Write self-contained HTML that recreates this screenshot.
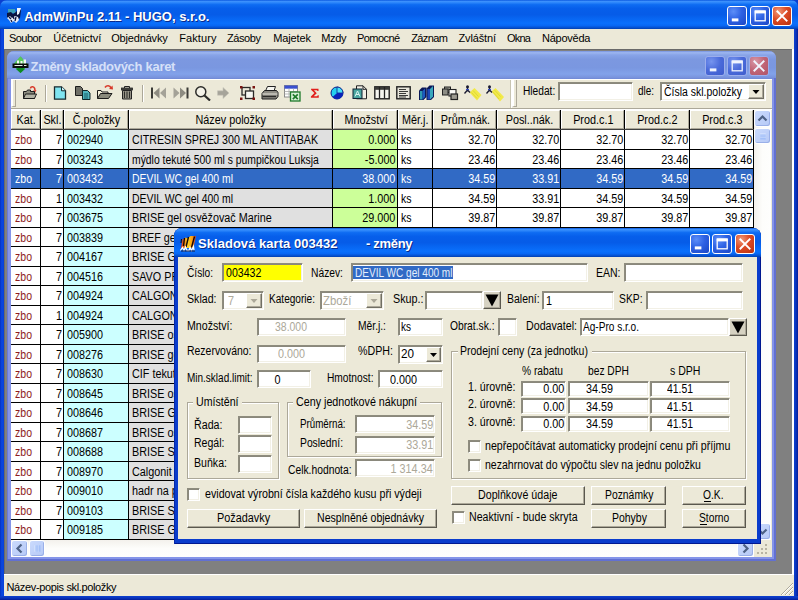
<!DOCTYPE html>
<html><head><meta charset="utf-8"><title>AdmWinPu 2.11 - HUGO, s.r.o.</title>
<style>
html,body{margin:0;padding:0}
body{width:798px;height:600px;overflow:hidden;position:relative;background:#ECE9D8;font-family:'Liberation Sans', sans-serif;font-size:11px}
div,span,svg{position:absolute}
span{white-space:pre}
div svg{left:0;top:0}
</style></head>
<body>
<div style="left:0px;top:0px;width:798px;height:600px;background:#0A3FD0"></div>
<div style="left:0px;top:0px;width:798px;height:29px;background:linear-gradient(to bottom,#0A58E0 0%,#3C90FC 5%,#2C86FA 9%,#0E6CF2 16%,#065EEA 30%,#065CE8 50%,#0868F4 68%,#0A70FC 80%,#0868F4 88%,#0656D8 94%,#0240B0 100%);border-radius:7px 7px 0 0"></div>
<div style="left:0px;top:29px;width:4px;height:571px;background:linear-gradient(to right,#0630C0,#0A48E0 45%,#0840D8)"></div>
<div style="left:794px;top:29px;width:4px;height:571px;background:linear-gradient(to right,#0C40D0,#0A34BC 50%,#041C98)"></div>
<div style="left:0px;top:596px;width:798px;height:4px;background:linear-gradient(to bottom,#0C40D0,#0A34BC 50%,#041C98)"></div>
<div style="left:4px;top:29px;width:790px;height:20px;background:#ECE9D8"></div>
<div style="left:4px;top:49px;width:790px;height:525px;background:#808080;box-shadow:inset 1px 1px 0 #6a6a6a"></div>
<div style="left:792px;top:49px;width:2px;height:525px;background:#fff"></div>
<div style="left:4px;top:574px;width:790px;height:22px;background:#ECE9D8;border-top:1px solid #fff;box-sizing:border-box"></div>
<svg style="left:6px;top:7px" width="17" height="17" viewBox="0 0 17 17"><path d="M2 2h7l1 4-8 1z" fill="#3CA0B8"/><path d="M1 6l4-1 2 2 3-2 2-3 3 1-1 8-4 3-6-1-3-3z" fill="#0A1440"/><path d="M11 1h4l-2 6-2 1z" fill="#F4F8FF"/><path d="M1 11l3-2 2 2 3-2 3 1 1 3-3 3-2-2-3 2-2-3z" fill="#E8EEF8"/><path d="M3 10l2 2M7 9l1 3M10 10l-1 4M5 13l1 2" stroke="#0A1440" stroke-width="1.300"/></svg>
<span style="top:9.1px;line-height:15px;font-size:13px;color:#fff;font-weight:700;left:24.2px;letter-spacing:-0.01px;text-shadow:1px 1px 0 #0a2a8a;">AdmWinPu 2.11 - HUGO, s.r.o.</span>
<span style="top:32.1px;line-height:13px;font-size:11px;color:#000;left:8.9px;letter-spacing:-0.50px;">Soubor</span>
<span style="top:32.1px;line-height:13px;font-size:11px;color:#000;left:53.3px;letter-spacing:-0.03px;">Účetnictví</span>
<span style="top:32.1px;line-height:13px;font-size:11px;color:#000;left:111.2px;letter-spacing:-0.17px;">Objednávky</span>
<span style="top:32.1px;line-height:13px;font-size:11px;color:#000;left:179.2px;letter-spacing:0.10px;">Faktury</span>
<span style="top:32.1px;line-height:13px;font-size:11px;color:#000;left:226.9px;letter-spacing:-0.40px;">Zásoby</span>
<span style="top:32.1px;line-height:13px;font-size:11px;color:#000;left:273.2px;letter-spacing:-0.12px;">Majetek</span>
<span style="top:32.1px;line-height:13px;font-size:11px;color:#000;left:321.3px;letter-spacing:-0.39px;">Mzdy</span>
<span style="top:32.1px;line-height:13px;font-size:11px;color:#000;left:357.0px;letter-spacing:-0.56px;">Pomocné</span>
<span style="top:32.1px;line-height:13px;font-size:11px;color:#000;left:411.2px;letter-spacing:-0.61px;">Záznam</span>
<span style="top:32.1px;line-height:13px;font-size:11px;color:#000;left:458.5px;letter-spacing:-0.15px;">Zvláštní</span>
<span style="top:32.1px;line-height:13px;font-size:11px;color:#000;left:507.0px;letter-spacing:-0.77px;">Okna</span>
<span style="top:32.1px;line-height:13px;font-size:11px;color:#000;left:542.0px;letter-spacing:-0.24px;">Nápověda</span>
<span style="top:580.6px;line-height:13px;font-size:11px;color:#000;left:6.5px;letter-spacing:-0.36px;">Název-popis skl.položky</span>
<div style="left:727px;top:6px;width:20px;height:20px;background:radial-gradient(circle at 30% 25%,#5C8EF8 0%,#2E62E4 45%,#1A46C4 100%);border:1px solid #fff;border-radius:3px;box-sizing:border-box"><svg width="18" height="18" viewBox="1 1 18 18"><rect x="4.8" y="12.4" width="6.6" height="3" fill="#fff"/></svg></div>
<div style="left:750px;top:6px;width:20px;height:20px;background:radial-gradient(circle at 30% 25%,#5C8EF8 0%,#2E62E4 45%,#1A46C4 100%);border:1px solid #fff;border-radius:3px;box-sizing:border-box"><svg width="18" height="18" viewBox="1 1 18 18"><rect x="5.2" y="5.2" width="10.0" height="9.6" fill="none" stroke="#fff" stroke-width="1.3"/><rect x="4.8" y="4.4" width="10.8" height="3" fill="#fff"/></svg></div>
<div style="left:772px;top:6px;width:20px;height:20px;background:radial-gradient(circle at 30% 25%,#F09A78 0%,#DC4A24 45%,#B8300E 100%);border:1px solid #fff;border-radius:3px;box-sizing:border-box"><svg width="18" height="18" viewBox="1 1 18 18"><path d="M5.4 5.4L14.6 14.6M14.6 5.4L5.4 14.6" stroke="#fff" stroke-width="1.9" stroke-linecap="square"/></svg></div>
<div style="left:7px;top:51px;width:769px;height:510px;background:#8494E8;border-radius:7px 7px 0 0"></div>
<div style="left:7px;top:51px;width:769px;height:28px;background:linear-gradient(to bottom,#7693E0 0%,#9DB6F0 6%,#88A4E8 14%,#7C98E0 30%,#7A97E0 60%,#82A2EA 82%,#7A94DE 94%,#6F88D4 100%);border-radius:7px 7px 0 0"></div>
<div style="left:7px;top:78px;width:1px;height:483px;background:#6A7AD4"></div>
<div style="left:774px;top:78px;width:2px;height:483px;background:#6270D2"></div>
<div style="left:7px;top:559px;width:769px;height:2px;background:#6270D2"></div>
<svg style="left:12px;top:56px" width="17" height="18" viewBox="0 0 17 18"><path d="M8.500 .5l7.500 8.500-7.500 8-7.500-8z" fill="#22B83A"/><path d="M8.500 .5l3 3.500-1 5h-6l-2-2z" fill="#58C858"/><path d="M4 13l4.500 4 4.500-4-4.500-2z" fill="#0E8A22"/><path d="M5 4.500h2v3.500h-2zM8.500 5h2v3h-2zM11.500 3.500h2.500v4.500h-2.500z" fill="#F4F8F4"/><path d="M.5 7.500h16v4.500h-16z" fill="#0A100A"/><path d="M2.500 9.500h8M12 9.500h2.500" stroke="#E8F0E8" stroke-width="1"/></svg>
<span style="top:59.1px;line-height:15px;font-size:13px;color:#D6E0F8;font-weight:700;left:30.5px;letter-spacing:-0.29px;">Změny skladových karet</span>
<div style="left:705px;top:56px;width:20px;height:20px;background:radial-gradient(circle at 30% 25%,#7694EE 0%,#4A6ADA 50%,#3E5CCC 100%);border:1px solid #9CAEEC;border-radius:3px;box-sizing:border-box"><svg width="18" height="18" viewBox="1 1 18 18"><rect x="4.8" y="12.4" width="6.6" height="3" fill="#F0F4FE"/></svg></div>
<div style="left:727px;top:56px;width:20px;height:20px;background:radial-gradient(circle at 30% 25%,#7694EE 0%,#4A6ADA 50%,#3E5CCC 100%);border:1px solid #9CAEEC;border-radius:3px;box-sizing:border-box"><svg width="18" height="18" viewBox="1 1 18 18"><rect x="5.2" y="5.2" width="10.0" height="9.6" fill="none" stroke="#F0F4FE" stroke-width="1.3"/><rect x="4.8" y="4.4" width="10.8" height="3" fill="#F0F4FE"/></svg></div>
<div style="left:749px;top:56px;width:20px;height:20px;background:radial-gradient(circle at 30% 25%,#D898A6 0%,#C06476 50%,#B05468 100%);border:1px solid #9CAEEC;border-radius:3px;box-sizing:border-box"><svg width="18" height="18" viewBox="1 1 18 18"><path d="M5.4 5.4L14.6 14.6M14.6 5.4L5.4 14.6" stroke="#F0F4FE" stroke-width="1.9" stroke-linecap="square"/></svg></div>
<div style="left:11px;top:79px;width:761px;height:478px;background:#ECE9D8"></div>
<div style="left:11px;top:79px;width:761px;height:1px;background:#fff"></div>
<div style="left:11px;top:108px;width:761px;height:1px;background:#ACA899"></div>
<div style="left:11px;top:109px;width:761px;height:1px;background:#fff"></div>
<div style="left:11px;top:80px;width:5px;height:27px;border-left:2px solid #fff;border-right:1px solid #ACA899;border-bottom:1px solid #ACA899;box-sizing:border-box"></div>
<div style="left:510px;top:80px;width:1px;height:28px;background:#C8C5B2"></div>
<div style="left:511px;top:80px;width:1px;height:28px;background:#fff"></div>
<div style="left:512px;top:80px;width:5px;height:27px;border-left:2px solid #fff;border-right:1px solid #ACA899;border-bottom:1px solid #ACA899;box-sizing:border-box"></div>
<div style="left:45px;top:85px;width:1px;height:17px;background:#ACA899"></div>
<div style="left:46px;top:85px;width:1px;height:17px;background:#fff"></div>
<div style="left:142px;top:85px;width:1px;height:17px;background:#ACA899"></div>
<div style="left:143px;top:85px;width:1px;height:17px;background:#fff"></div>
<svg style="left:22px;top:85px" width="16" height="16" viewBox="0 0 16 16"><path d="M8.5 3.5c0-2 3-2.5 4-.5l.5 2" stroke="#D83A2A" stroke-width="1.6" fill="none"/><path d="M11 5.5l3.5-.5-1.5 3z" fill="#D83A2A"/><path d="M1.5 13.5v-7h3l1-1.5h3v1.5h4v7z" fill="#8C8C80" stroke="#1C1C1C" stroke-width="1"/><path d="M1.5 13.5l2-4.5h11l-2 4.5z" fill="#B4B4A6" stroke="#1C1C1C" stroke-width="1"/></svg>
<svg style="left:53px;top:86px" width="14" height="14" viewBox="0 0 14 14"><path d="M1.5 .8h7l4 4v8.400h-11z" fill="#7FE4F0" stroke="#1A2A2E" stroke-width="1.3"/><path d="M8.500 .8v4h4" fill="#C8F6FA" stroke="#1A2A2E" stroke-width="1"/></svg>
<svg style="left:74px;top:86px" width="17" height="14" viewBox="0 0 17 14"><path d="M1.500 .5h5l2 2v7h-7z" fill="#6E6E66" stroke="#1A1A1A" stroke-width="1"/><path d="M8.500 4.500h5l2.500 2.500v6.500h-7.500z" fill="#4FB4BE" stroke="#10282C" stroke-width="1"/><path d="M10 8h4M10 10h4M10 12h4" stroke="#0E4A52" stroke-width=".8"/></svg>
<svg style="left:96px;top:84px" width="18" height="16" viewBox="0 0 18 16"><path d="M9 3.500c1.500-2.500 5-2.500 6 .5" stroke="#D83A2A" stroke-width="1.600" fill="none"/><path d="M13 5l4 .5-.5-4z" fill="#D83A2A"/><path d="M1.500 14.500v-8h3.500l1 1.500h6v2" fill="#F4F0DC" stroke="#1C1C1C" stroke-width="1"/><path d="M1.500 14.500l3-5h11.500l-3.500 5z" fill="#8A8A7C" stroke="#1C1C1C" stroke-width="1"/></svg>
<svg style="left:120px;top:86px" width="14" height="15" viewBox="0 0 14 15"><path d="M4.500 2v-1.500h5v1.500" fill="none" stroke="#222" stroke-width="1"/><rect x="1.500" y="2" width="11" height="2" fill="#4A4A44" stroke="#222" stroke-width=".8"/><path d="M2.500 4.500h9v8.500h-9z" fill="#9A978A" stroke="#222" stroke-width="1"/><path d="M4.500 5.500v6.500M7 5.500v6.500M9.500 5.500v6.500" stroke="#2E2E2A" stroke-width="1.100"/></svg>
<svg style="left:150px;top:87px" width="17" height="12" viewBox="0 0 17 12"><rect x="1" y=".5" width="2" height="11" fill="#3A3A36"/><path d="M9.500 .5v11l-6-5.500z" fill="#8E8C82"/><path d="M16 .5v11l-6-5.500z" fill="#A4A298"/></svg>
<svg style="left:173px;top:87px" width="17" height="12" viewBox="0 0 17 12"><rect x="13.500" y=".5" width="2" height="11" fill="#3A3A36"/><path d="M7 .5v11l6-5.500z" fill="#8E8C82"/><path d="M.5 .5v11l6-5.500z" fill="#A4A298"/></svg>
<svg style="left:194px;top:85px" width="18" height="16" viewBox="0 0 18 16"><circle cx="6.800" cy="6.800" r="5" fill="#F4F2E8" stroke="#2A2A28" stroke-width="1.500"/><path d="M10.500 10.500l5.500 5" stroke="#2A2A28" stroke-width="2.200"/></svg>
<svg style="left:217px;top:87px" width="13" height="12" viewBox="0 0 13 12"><path d="M.5 3.800h5.500v-3.300l6 5.500-6 5.500v-3.300h-5.500z" fill="#A6A49A" stroke="#C8C6BA" stroke-width=".6"/></svg>
<svg style="left:239px;top:85px" width="17" height="16" viewBox="0 0 17 16"><rect x="3" y="2.500" width="8" height="7.500" fill="#ECE9D8" stroke="#2A2A28" stroke-width="1.300"/><rect x="6.500" y="6" width="8" height="7.500" fill="#F8F8F2" stroke="#2A2A28" stroke-width="1.300"/><g fill="#7A1410"><rect x="1" y="1" width="2.500" height="2.500"/><rect x="13.500" y="1" width="2.500" height="2.500"/><rect x="1" y="12.500" width="2.500" height="2.500"/><rect x="13.500" y="12.500" width="2.500" height="2.500"/></g></svg>
<svg style="left:261px;top:85px" width="18" height="16" viewBox="0 0 18 16"><path d="M4.500 6l2-4.500h8l-1.500 4.500z" fill="#F6F6F0" stroke="#222" stroke-width="1"/><path d="M1 8.500l2.500-3h12l1.500 2v4l-2 2.500h-14z" fill="#8E8C84" stroke="#1C1C1C" stroke-width="1"/><path d="M1.500 9h15" stroke="#E8E6DC" stroke-width="1"/><path d="M1.500 11.500h13.500" stroke="#2A2A28" stroke-width="1.400"/></svg>
<svg style="left:284px;top:85px" width="17" height="17" viewBox="0 0 17 17"><rect x=".5" y=".5" width="13" height="11.500" fill="#fff" stroke="#8A8A8A" stroke-width="1"/><rect x=".5" y=".5" width="13" height="3.200" fill="#3A50D0"/><path d="M.5 6.500h13M.5 9h13M5 3.500v8.500M9.500 3.500v8.500" stroke="#A8A8A8" stroke-width=".8"/><rect x="6.500" y="7" width="9.500" height="9" fill="#D8F0D8" stroke="#1E7A2A" stroke-width="1.300"/><path d="M8.800 9.300l5 4.800M13.800 9.300l-5 4.800" stroke="#1E7A2A" stroke-width="1.600"/></svg>
<svg style="left:309.5px;top:88px" width="10" height="10.5" viewBox="0 0 11 12"><path d="M1 .8h8.500v2.700h-1.200l-.5-1h-3.500l3.200 3.400-3.500 3.600h4l.6-1.200h1.200v2.900h-9v-1.400l4-4.100-3.800-3.800z" fill="#E0201C"/></svg>
<svg style="left:330px;top:86px" width="14" height="14" viewBox="0 0 14 14"><circle cx="7" cy="7" r="6" fill="#24D0EE" stroke="#0A1E8A" stroke-width="1"/><path d="M7 7v-6a6 6 0 0 1 6 6z" fill="#48E0F8" stroke="#0A1E8A" stroke-width=".8"/><path d="M7 7h6a6 6 0 0 1-10.400 4.100z" fill="#0A22B8"/></svg>
<svg style="left:352px;top:85px" width="16" height="16" viewBox="0 0 16 16"><path d="M4.500 .8h6.500l3.500 3.500v9.500h-10z" fill="#F2F0E6" stroke="#222" stroke-width="1"/><path d="M11 .8v3.500h3.500" fill="none" stroke="#222" stroke-width="1"/><rect x="1" y="4" width="9" height="9.500" fill="#4AA6A0" stroke="#123" stroke-width="1"/><path d="M3 11.500l2.500-5.500 2.500 5.500M4 9.500h3" stroke="#D8F4F0" stroke-width="1" fill="none"/></svg>
<svg style="left:374px;top:86px" width="16" height="14" viewBox="0 0 16 14"><rect x=".8" y=".8" width="14.400" height="12" fill="#F6F6F0" stroke="#222" stroke-width="1.400"/><rect x=".8" y=".8" width="14.400" height="3" fill="#3A3A38"/><path d="M5.500 1v11.500M10.500 1v11.500" stroke="#222" stroke-width="1.300"/></svg>
<svg style="left:396px;top:86px" width="15" height="14" viewBox="0 0 15 14"><rect x=".8" y=".8" width="13.400" height="12" fill="#E8E6DC" stroke="#222" stroke-width="1.400"/><path d="M3 3.500h7M3 5.500h9M3 7.500h7M3 9.500h9M3 11h7" stroke="#3A3A38" stroke-width="1"/></svg>
<svg style="left:418px;top:85px" width="17" height="16" viewBox="0 0 17 16"><path d="M1 15v-9.500l3-3h4.500v9.500l-3 3z" fill="#0C1858"/><path d="M2 14.500v-8.500h2.500v8.500z" fill="#2E9AB0"/><path d="M4.500 6l2.500-2.500v8.500l-2.500 2.500z" fill="#1C5AC0"/><path d="M8.500 15v-11.500l3-3h4.500v11.500l-3 3z" fill="#0C1858"/><path d="M9.500 14.500v-10.500h2.500v10.500z" fill="#1C48B8"/><path d="M12 4l3-3v10.500l-3 3z" fill="#3AA8BC"/></svg>
<svg style="left:441px;top:86px" width="18" height="15" viewBox="0 0 18 15"><rect x="3.500" y="1" width="6" height="5.500" fill="#9A9A90" stroke="#222" stroke-width="1"/><rect x="1.500" y="3" width="5.500" height="6" fill="#8C8C84" stroke="#222" stroke-width="1"/><rect x="8" y="3.500" width="7" height="6.500" fill="#FAFAF6" stroke="#222" stroke-width="1.100"/><rect x="10" y="8" width="6.500" height="5.500" fill="#9C9A90" stroke="#222" stroke-width="1.200"/></svg>
<svg style="left:463px;top:85px" width="19" height="17" viewBox="0 0 19 17"><path d="M6.500 7.500l5-4.500 7 7-4.500 5.500z" fill="#F2EA48"/><path d="M10 5.500l5.500 6M8.500 7.500l5.500 6" stroke="#DCD434" stroke-width=".9"/><circle cx="4.500" cy="1.800" r="1.500" fill="#1A1A30"/><path d="M4.500 3v3.500M1.500 8.500l3-3.500 2.500 2.500" stroke="#1A1A30" stroke-width="1.300" fill="none"/><path d="M3 4.500h3" stroke="#3048C0" stroke-width="1.200"/></svg>
<svg style="left:485px;top:85px" width="20" height="18" viewBox="0 0 20 18"><path d="M6.500 6.500l4-3.500 8.500 9-4 4.500z" fill="#F2EA48"/><path d="M9.500 5l6 6.500M8 7l6 7" stroke="#DCD434" stroke-width=".9"/><circle cx="4.500" cy="1.800" r="1.500" fill="#1A1A30"/><path d="M4.500 3v3.500M1.500 8.500l3-3.500 2.500 2.500" stroke="#1A1A30" stroke-width="1.300" fill="none"/><path d="M3 4.500h3" stroke="#3048C0" stroke-width="1.200"/></svg>
<span style="top:84.1px;line-height:14px;font-size:12.5px;color:#000;left:523.3px;transform-origin:0 50%;transform:scaleX(0.813);">Hledat:</span>
<div style="left:558px;top:82px;width:75px;height:19px;background:#fff;box-sizing:border-box;border:1px solid;border-color:#8E8C7E #fff #fff #8E8C7E;box-shadow:inset 1px 1px 0 #8A887C,inset -1px -1px 0 #F2F0E6;"></div>
<span style="top:83.9px;line-height:14px;font-size:12.5px;color:#000;left:637.5px;transform-origin:0 50%;transform:scaleX(0.794);">dle:</span>
<div style="left:660px;top:82px;width:106px;height:19px;background:#fff;box-sizing:border-box;border:1px solid;border-color:#8E8C7E #fff #fff #8E8C7E;box-shadow:inset 1px 1px 0 #8A887C,inset -1px -1px 0 #F2F0E6;"></div>
<span style="top:84.6px;line-height:14px;font-size:12.5px;color:#000;left:663.5px;transform-origin:0 50%;transform:scaleX(0.838);">Čísla skl.položky</span>
<div style="left:748px;top:84px;width:16px;height:15px;background:#ECE9D8;box-sizing:border-box;border:1px solid;border-color:#fff #716F64 #716F64 #fff;box-shadow:inset -1px -1px 0 #ACA899"><svg width="14" height="13" style="position:absolute;left:0;top:0"><path d="M3.5 5.0h7l-3.5 4z" fill="#000"/></svg></div>
<div style="left:11px;top:110px;width:743px;height:430px;background:#fff"></div>
<div style="left:64px;top:130px;width:64px;height:410px;background:#CCFFFF"></div>
<div style="left:129px;top:130px;width:203px;height:410px;background:#E0E0E0"></div>
<div style="left:333px;top:130px;width:64px;height:410px;background:#CCFF99"></div>
<div style="left:11px;top:169px;width:743px;height:20px;background:#316AC5"></div>
<div style="left:40px;top:130px;width:1px;height:410px;background:#000"></div>
<div style="left:63px;top:130px;width:1px;height:410px;background:#000"></div>
<div style="left:128px;top:130px;width:1px;height:410px;background:#000"></div>
<div style="left:332px;top:130px;width:1px;height:410px;background:#000"></div>
<div style="left:397px;top:130px;width:1px;height:410px;background:#000"></div>
<div style="left:432px;top:130px;width:1px;height:410px;background:#000"></div>
<div style="left:496px;top:130px;width:1px;height:410px;background:#000"></div>
<div style="left:560px;top:130px;width:1px;height:410px;background:#000"></div>
<div style="left:624px;top:130px;width:1px;height:410px;background:#000"></div>
<div style="left:689px;top:130px;width:1px;height:410px;background:#000"></div>
<div style="left:753px;top:130px;width:1px;height:410px;background:#000"></div>
<div style="left:11px;top:149px;width:743px;height:1px;background:#000"></div>
<div style="left:11px;top:168px;width:743px;height:1px;background:#000"></div>
<div style="left:11px;top:188px;width:743px;height:1px;background:#000"></div>
<div style="left:11px;top:207px;width:743px;height:1px;background:#000"></div>
<div style="left:11px;top:227px;width:743px;height:1px;background:#000"></div>
<div style="left:11px;top:246px;width:743px;height:1px;background:#000"></div>
<div style="left:11px;top:266px;width:743px;height:1px;background:#000"></div>
<div style="left:11px;top:285px;width:743px;height:1px;background:#000"></div>
<div style="left:11px;top:305px;width:743px;height:1px;background:#000"></div>
<div style="left:11px;top:324px;width:743px;height:1px;background:#000"></div>
<div style="left:11px;top:344px;width:743px;height:1px;background:#000"></div>
<div style="left:11px;top:363px;width:743px;height:1px;background:#000"></div>
<div style="left:11px;top:383px;width:743px;height:1px;background:#000"></div>
<div style="left:11px;top:402px;width:743px;height:1px;background:#000"></div>
<div style="left:11px;top:422px;width:743px;height:1px;background:#000"></div>
<div style="left:11px;top:441px;width:743px;height:1px;background:#000"></div>
<div style="left:11px;top:461px;width:743px;height:1px;background:#000"></div>
<div style="left:11px;top:480px;width:743px;height:1px;background:#000"></div>
<div style="left:11px;top:500px;width:743px;height:1px;background:#000"></div>
<div style="left:11px;top:519px;width:743px;height:1px;background:#000"></div>
<div style="left:11px;top:539px;width:743px;height:1px;background:#000"></div>
<div style="left:11px;top:110px;width:743px;height:20px;background:#000"></div>
<div style="left:11px;top:110px;width:29px;height:19px;background:#ECE9D8;box-sizing:border-box;border:1px solid;border-color:#fff #ACA899 #ACA899 #fff"></div>
<span style="top:113.3px;line-height:14px;font-size:12.5px;color:#000;left:14.9px;transform-origin:50% 50%;transform:scaleX(0.865);">Kat.</span>
<div style="left:41px;top:110px;width:22px;height:19px;background:#ECE9D8;box-sizing:border-box;border:1px solid;border-color:#fff #ACA899 #ACA899 #fff"></div>
<span style="top:113.3px;line-height:14px;font-size:12.5px;color:#000;left:42.1px;transform-origin:50% 50%;transform:scaleX(0.865);">Skl.</span>
<div style="left:64px;top:110px;width:64px;height:19px;background:#ECE9D8;box-sizing:border-box;border:1px solid;border-color:#fff #ACA899 #ACA899 #fff"></div>
<span style="top:113.3px;line-height:14px;font-size:12.5px;color:#000;left:69.1px;transform-origin:50% 50%;transform:scaleX(0.865);">Č.položky</span>
<div style="left:129px;top:110px;width:203px;height:19px;background:#ECE9D8;box-sizing:border-box;border:1px solid;border-color:#fff #ACA899 #ACA899 #fff"></div>
<span style="top:113.3px;line-height:14px;font-size:12.5px;color:#000;left:190.4px;transform-origin:50% 50%;transform:scaleX(0.865);">Název položky</span>
<div style="left:333px;top:110px;width:64px;height:19px;background:#ECE9D8;box-sizing:border-box;border:1px solid;border-color:#fff #ACA899 #ACA899 #fff"></div>
<span style="top:113.3px;line-height:14px;font-size:12.5px;color:#000;left:340.5px;transform-origin:50% 50%;transform:scaleX(0.865);">Množství</span>
<div style="left:398px;top:110px;width:34px;height:19px;background:#ECE9D8;box-sizing:border-box;border:1px solid;border-color:#fff #ACA899 #ACA899 #fff"></div>
<span style="top:113.3px;line-height:14px;font-size:12.5px;color:#000;left:400.2px;transform-origin:50% 50%;transform:scaleX(0.865);">Měr.j.</span>
<div style="left:433px;top:110px;width:63px;height:19px;background:#ECE9D8;box-sizing:border-box;border:1px solid;border-color:#fff #ACA899 #ACA899 #fff"></div>
<span style="top:113.3px;line-height:14px;font-size:12.5px;color:#000;left:436.5px;transform-origin:50% 50%;transform:scaleX(0.865);">Prům.nák.</span>
<div style="left:497px;top:110px;width:63px;height:19px;background:#ECE9D8;box-sizing:border-box;border:1px solid;border-color:#fff #ACA899 #ACA899 #fff"></div>
<span style="top:113.3px;line-height:14px;font-size:12.5px;color:#000;left:501.6px;transform-origin:50% 50%;transform:scaleX(0.865);">Posl..nák.</span>
<div style="left:561px;top:110px;width:63px;height:19px;background:#ECE9D8;box-sizing:border-box;border:1px solid;border-color:#fff #ACA899 #ACA899 #fff"></div>
<span style="top:113.3px;line-height:14px;font-size:12.5px;color:#000;left:569.7px;transform-origin:50% 50%;transform:scaleX(0.865);">Prod.c.1</span>
<div style="left:625px;top:110px;width:64px;height:19px;background:#ECE9D8;box-sizing:border-box;border:1px solid;border-color:#fff #ACA899 #ACA899 #fff"></div>
<span style="top:113.3px;line-height:14px;font-size:12.5px;color:#000;left:634.2px;transform-origin:50% 50%;transform:scaleX(0.865);">Prod.c.2</span>
<div style="left:690px;top:110px;width:63px;height:19px;background:#ECE9D8;box-sizing:border-box;border:1px solid;border-color:#fff #ACA899 #ACA899 #fff"></div>
<span style="top:113.3px;line-height:14px;font-size:12.5px;color:#000;left:698.7px;transform-origin:50% 50%;transform:scaleX(0.865);">Prod.c.3</span>
<div style="left:11px;top:129px;width:743px;height:1px;background:#404040"></div>
<span style="top:132.6px;line-height:14px;font-size:12.5px;color:#8E1C1C;left:15.0px;transform-origin:0 50%;transform:scaleX(0.843);">zbo</span>
<span style="top:132.6px;line-height:14px;font-size:12.5px;color:#000;right:736.0px;transform-origin:100% 50%;transform:scaleX(0.865);">7</span>
<span style="top:132.6px;line-height:14px;font-size:12.5px;color:#000;left:67.2px;transform-origin:0 50%;transform:scaleX(0.863);">002940</span>
<span style="top:132.6px;line-height:14px;font-size:12.5px;color:#000;left:131.5px;transform-origin:0 50%;transform:scaleX(0.853);">CITRESIN SPREJ 300 ML ANTITABAK</span>
<span style="top:132.6px;line-height:14px;font-size:12.5px;color:#000;right:402.3px;transform-origin:100% 50%;transform:scaleX(0.865);">0.000</span>
<span style="top:132.6px;line-height:14px;font-size:12.5px;color:#000;left:401.0px;transform-origin:0 50%;transform:scaleX(0.840);">ks</span>
<span style="top:132.6px;line-height:14px;font-size:12.5px;color:#000;right:302.7px;transform-origin:100% 50%;transform:scaleX(0.865);">32.70</span>
<span style="top:132.6px;line-height:14px;font-size:12.5px;color:#000;right:238.7px;transform-origin:100% 50%;transform:scaleX(0.865);">32.70</span>
<span style="top:132.6px;line-height:14px;font-size:12.5px;color:#000;right:174.7px;transform-origin:100% 50%;transform:scaleX(0.865);">32.70</span>
<span style="top:132.6px;line-height:14px;font-size:12.5px;color:#000;right:109.7px;transform-origin:100% 50%;transform:scaleX(0.865);">32.70</span>
<span style="top:132.6px;line-height:14px;font-size:12.5px;color:#000;right:45.7px;transform-origin:100% 50%;transform:scaleX(0.865);">32.70</span>
<span style="top:152.6px;line-height:14px;font-size:12.5px;color:#8E1C1C;left:15.0px;transform-origin:0 50%;transform:scaleX(0.843);">zbo</span>
<span style="top:152.6px;line-height:14px;font-size:12.5px;color:#000;right:736.0px;transform-origin:100% 50%;transform:scaleX(0.865);">7</span>
<span style="top:152.6px;line-height:14px;font-size:12.5px;color:#000;left:67.2px;transform-origin:0 50%;transform:scaleX(0.863);">003243</span>
<span style="top:152.6px;line-height:14px;font-size:12.5px;color:#000;left:131.5px;transform-origin:0 50%;transform:scaleX(0.830);">mýdlo tekuté 500 ml s pumpičkou Luksja</span>
<span style="top:152.6px;line-height:14px;font-size:12.5px;color:#000;right:402.3px;transform-origin:100% 50%;transform:scaleX(0.865);">-5.000</span>
<span style="top:152.6px;line-height:14px;font-size:12.5px;color:#000;left:401.0px;transform-origin:0 50%;transform:scaleX(0.840);">ks</span>
<span style="top:152.6px;line-height:14px;font-size:12.5px;color:#000;right:302.7px;transform-origin:100% 50%;transform:scaleX(0.865);">23.46</span>
<span style="top:152.6px;line-height:14px;font-size:12.5px;color:#000;right:238.7px;transform-origin:100% 50%;transform:scaleX(0.865);">23.46</span>
<span style="top:152.6px;line-height:14px;font-size:12.5px;color:#000;right:174.7px;transform-origin:100% 50%;transform:scaleX(0.865);">23.46</span>
<span style="top:152.6px;line-height:14px;font-size:12.5px;color:#000;right:109.7px;transform-origin:100% 50%;transform:scaleX(0.865);">23.46</span>
<span style="top:152.6px;line-height:14px;font-size:12.5px;color:#000;right:45.7px;transform-origin:100% 50%;transform:scaleX(0.865);">23.46</span>
<span style="top:171.6px;line-height:14px;font-size:12.5px;color:#fff;left:15.0px;transform-origin:0 50%;transform:scaleX(0.843);">zbo</span>
<span style="top:171.6px;line-height:14px;font-size:12.5px;color:#fff;right:736.0px;transform-origin:100% 50%;transform:scaleX(0.865);">7</span>
<span style="top:171.6px;line-height:14px;font-size:12.5px;color:#fff;left:67.2px;transform-origin:0 50%;transform:scaleX(0.863);">003432</span>
<span style="top:171.6px;line-height:14px;font-size:12.5px;color:#fff;left:131.5px;transform-origin:0 50%;transform:scaleX(0.834);">DEVIL WC gel 400 ml</span>
<span style="top:171.6px;line-height:14px;font-size:12.5px;color:#fff;right:402.3px;transform-origin:100% 50%;transform:scaleX(0.865);">38.000</span>
<span style="top:171.6px;line-height:14px;font-size:12.5px;color:#fff;left:401.0px;transform-origin:0 50%;transform:scaleX(0.840);">ks</span>
<span style="top:171.6px;line-height:14px;font-size:12.5px;color:#fff;right:302.7px;transform-origin:100% 50%;transform:scaleX(0.865);">34.59</span>
<span style="top:171.6px;line-height:14px;font-size:12.5px;color:#fff;right:238.7px;transform-origin:100% 50%;transform:scaleX(0.865);">33.91</span>
<span style="top:171.6px;line-height:14px;font-size:12.5px;color:#fff;right:174.7px;transform-origin:100% 50%;transform:scaleX(0.865);">34.59</span>
<span style="top:171.6px;line-height:14px;font-size:12.5px;color:#fff;right:109.7px;transform-origin:100% 50%;transform:scaleX(0.865);">34.59</span>
<span style="top:171.6px;line-height:14px;font-size:12.5px;color:#fff;right:45.7px;transform-origin:100% 50%;transform:scaleX(0.865);">34.59</span>
<span style="top:191.6px;line-height:14px;font-size:12.5px;color:#8E1C1C;left:15.0px;transform-origin:0 50%;transform:scaleX(0.843);">zbo</span>
<span style="top:191.6px;line-height:14px;font-size:12.5px;color:#000;right:736.0px;transform-origin:100% 50%;transform:scaleX(0.865);">1</span>
<span style="top:191.6px;line-height:14px;font-size:12.5px;color:#000;left:67.2px;transform-origin:0 50%;transform:scaleX(0.863);">003432</span>
<span style="top:191.6px;line-height:14px;font-size:12.5px;color:#000;left:131.5px;transform-origin:0 50%;transform:scaleX(0.834);">DEVIL WC gel 400 ml</span>
<span style="top:191.6px;line-height:14px;font-size:12.5px;color:#000;right:402.3px;transform-origin:100% 50%;transform:scaleX(0.865);">1.000</span>
<span style="top:191.6px;line-height:14px;font-size:12.5px;color:#000;left:401.0px;transform-origin:0 50%;transform:scaleX(0.840);">ks</span>
<span style="top:191.6px;line-height:14px;font-size:12.5px;color:#000;right:302.7px;transform-origin:100% 50%;transform:scaleX(0.865);">34.59</span>
<span style="top:191.6px;line-height:14px;font-size:12.5px;color:#000;right:238.7px;transform-origin:100% 50%;transform:scaleX(0.865);">33.91</span>
<span style="top:191.6px;line-height:14px;font-size:12.5px;color:#000;right:174.7px;transform-origin:100% 50%;transform:scaleX(0.865);">34.59</span>
<span style="top:191.6px;line-height:14px;font-size:12.5px;color:#000;right:109.7px;transform-origin:100% 50%;transform:scaleX(0.865);">34.59</span>
<span style="top:191.6px;line-height:14px;font-size:12.5px;color:#000;right:45.7px;transform-origin:100% 50%;transform:scaleX(0.865);">34.59</span>
<span style="top:210.6px;line-height:14px;font-size:12.5px;color:#8E1C1C;left:15.0px;transform-origin:0 50%;transform:scaleX(0.843);">zbo</span>
<span style="top:210.6px;line-height:14px;font-size:12.5px;color:#000;right:736.0px;transform-origin:100% 50%;transform:scaleX(0.865);">7</span>
<span style="top:210.6px;line-height:14px;font-size:12.5px;color:#000;left:67.2px;transform-origin:0 50%;transform:scaleX(0.863);">003675</span>
<span style="top:210.6px;line-height:14px;font-size:12.5px;color:#000;left:131.5px;transform-origin:0 50%;transform:scaleX(0.863);">BRISE gel osvěžovač Marine</span>
<span style="top:210.6px;line-height:14px;font-size:12.5px;color:#000;right:402.3px;transform-origin:100% 50%;transform:scaleX(0.865);">29.000</span>
<span style="top:210.6px;line-height:14px;font-size:12.5px;color:#000;left:401.0px;transform-origin:0 50%;transform:scaleX(0.840);">ks</span>
<span style="top:210.6px;line-height:14px;font-size:12.5px;color:#000;right:302.7px;transform-origin:100% 50%;transform:scaleX(0.865);">39.87</span>
<span style="top:210.6px;line-height:14px;font-size:12.5px;color:#000;right:238.7px;transform-origin:100% 50%;transform:scaleX(0.865);">39.87</span>
<span style="top:210.6px;line-height:14px;font-size:12.5px;color:#000;right:174.7px;transform-origin:100% 50%;transform:scaleX(0.865);">39.87</span>
<span style="top:210.6px;line-height:14px;font-size:12.5px;color:#000;right:109.7px;transform-origin:100% 50%;transform:scaleX(0.865);">39.87</span>
<span style="top:210.6px;line-height:14px;font-size:12.5px;color:#000;right:45.7px;transform-origin:100% 50%;transform:scaleX(0.865);">39.87</span>
<span style="top:230.6px;line-height:14px;font-size:12.5px;color:#8E1C1C;left:15.0px;transform-origin:0 50%;transform:scaleX(0.843);">zbo</span>
<span style="top:230.6px;line-height:14px;font-size:12.5px;color:#000;right:736.0px;transform-origin:100% 50%;transform:scaleX(0.865);">7</span>
<span style="top:230.6px;line-height:14px;font-size:12.5px;color:#000;left:67.2px;transform-origin:0 50%;transform:scaleX(0.863);">003839</span>
<span style="top:230.6px;line-height:14px;font-size:12.5px;color:#000;left:131.5px;transform-origin:0 50%;transform:scaleX(0.865);">BREF gel</span>
<span style="top:249.6px;line-height:14px;font-size:12.5px;color:#8E1C1C;left:15.0px;transform-origin:0 50%;transform:scaleX(0.843);">zbo</span>
<span style="top:249.6px;line-height:14px;font-size:12.5px;color:#000;right:736.0px;transform-origin:100% 50%;transform:scaleX(0.865);">7</span>
<span style="top:249.6px;line-height:14px;font-size:12.5px;color:#000;left:67.2px;transform-origin:0 50%;transform:scaleX(0.863);">004167</span>
<span style="top:249.6px;line-height:14px;font-size:12.5px;color:#000;left:131.5px;transform-origin:0 50%;transform:scaleX(0.865);">BRISE G</span>
<span style="top:269.6px;line-height:14px;font-size:12.5px;color:#8E1C1C;left:15.0px;transform-origin:0 50%;transform:scaleX(0.843);">zbo</span>
<span style="top:269.6px;line-height:14px;font-size:12.5px;color:#000;right:736.0px;transform-origin:100% 50%;transform:scaleX(0.865);">7</span>
<span style="top:269.6px;line-height:14px;font-size:12.5px;color:#000;left:67.2px;transform-origin:0 50%;transform:scaleX(0.863);">004516</span>
<span style="top:269.6px;line-height:14px;font-size:12.5px;color:#000;left:131.5px;transform-origin:0 50%;transform:scaleX(0.865);">SAVO PR</span>
<span style="top:288.6px;line-height:14px;font-size:12.5px;color:#8E1C1C;left:15.0px;transform-origin:0 50%;transform:scaleX(0.843);">zbo</span>
<span style="top:288.6px;line-height:14px;font-size:12.5px;color:#000;right:736.0px;transform-origin:100% 50%;transform:scaleX(0.865);">7</span>
<span style="top:288.6px;line-height:14px;font-size:12.5px;color:#000;left:67.2px;transform-origin:0 50%;transform:scaleX(0.863);">004924</span>
<span style="top:288.6px;line-height:14px;font-size:12.5px;color:#000;left:131.5px;transform-origin:0 50%;transform:scaleX(0.865);">CALGON</span>
<span style="top:308.6px;line-height:14px;font-size:12.5px;color:#8E1C1C;left:15.0px;transform-origin:0 50%;transform:scaleX(0.843);">zbo</span>
<span style="top:308.6px;line-height:14px;font-size:12.5px;color:#000;right:736.0px;transform-origin:100% 50%;transform:scaleX(0.865);">1</span>
<span style="top:308.6px;line-height:14px;font-size:12.5px;color:#000;left:67.2px;transform-origin:0 50%;transform:scaleX(0.863);">004924</span>
<span style="top:308.6px;line-height:14px;font-size:12.5px;color:#000;left:131.5px;transform-origin:0 50%;transform:scaleX(0.865);">CALGON</span>
<span style="top:327.6px;line-height:14px;font-size:12.5px;color:#8E1C1C;left:15.0px;transform-origin:0 50%;transform:scaleX(0.843);">zbo</span>
<span style="top:327.6px;line-height:14px;font-size:12.5px;color:#000;right:736.0px;transform-origin:100% 50%;transform:scaleX(0.865);">7</span>
<span style="top:327.6px;line-height:14px;font-size:12.5px;color:#000;left:67.2px;transform-origin:0 50%;transform:scaleX(0.863);">005900</span>
<span style="top:327.6px;line-height:14px;font-size:12.5px;color:#000;left:131.5px;transform-origin:0 50%;transform:scaleX(0.865);">BRISE os</span>
<span style="top:347.6px;line-height:14px;font-size:12.5px;color:#8E1C1C;left:15.0px;transform-origin:0 50%;transform:scaleX(0.843);">zbo</span>
<span style="top:347.6px;line-height:14px;font-size:12.5px;color:#000;right:736.0px;transform-origin:100% 50%;transform:scaleX(0.865);">7</span>
<span style="top:347.6px;line-height:14px;font-size:12.5px;color:#000;left:67.2px;transform-origin:0 50%;transform:scaleX(0.863);">008276</span>
<span style="top:347.6px;line-height:14px;font-size:12.5px;color:#000;left:131.5px;transform-origin:0 50%;transform:scaleX(0.865);">BRISE gel</span>
<span style="top:366.6px;line-height:14px;font-size:12.5px;color:#8E1C1C;left:15.0px;transform-origin:0 50%;transform:scaleX(0.843);">zbo</span>
<span style="top:366.6px;line-height:14px;font-size:12.5px;color:#000;right:736.0px;transform-origin:100% 50%;transform:scaleX(0.865);">7</span>
<span style="top:366.6px;line-height:14px;font-size:12.5px;color:#000;left:67.2px;transform-origin:0 50%;transform:scaleX(0.863);">008630</span>
<span style="top:366.6px;line-height:14px;font-size:12.5px;color:#000;left:131.5px;transform-origin:0 50%;transform:scaleX(0.865);">CIF tekutý</span>
<span style="top:386.6px;line-height:14px;font-size:12.5px;color:#8E1C1C;left:15.0px;transform-origin:0 50%;transform:scaleX(0.843);">zbo</span>
<span style="top:386.6px;line-height:14px;font-size:12.5px;color:#000;right:736.0px;transform-origin:100% 50%;transform:scaleX(0.865);">7</span>
<span style="top:386.6px;line-height:14px;font-size:12.5px;color:#000;left:67.2px;transform-origin:0 50%;transform:scaleX(0.863);">008645</span>
<span style="top:386.6px;line-height:14px;font-size:12.5px;color:#000;left:131.5px;transform-origin:0 50%;transform:scaleX(0.865);">BRISE os</span>
<span style="top:405.6px;line-height:14px;font-size:12.5px;color:#8E1C1C;left:15.0px;transform-origin:0 50%;transform:scaleX(0.843);">zbo</span>
<span style="top:405.6px;line-height:14px;font-size:12.5px;color:#000;right:736.0px;transform-origin:100% 50%;transform:scaleX(0.865);">7</span>
<span style="top:405.6px;line-height:14px;font-size:12.5px;color:#000;left:67.2px;transform-origin:0 50%;transform:scaleX(0.863);">008646</span>
<span style="top:405.6px;line-height:14px;font-size:12.5px;color:#000;left:131.5px;transform-origin:0 50%;transform:scaleX(0.865);">BRISE G</span>
<span style="top:425.6px;line-height:14px;font-size:12.5px;color:#8E1C1C;left:15.0px;transform-origin:0 50%;transform:scaleX(0.843);">zbo</span>
<span style="top:425.6px;line-height:14px;font-size:12.5px;color:#000;right:736.0px;transform-origin:100% 50%;transform:scaleX(0.865);">7</span>
<span style="top:425.6px;line-height:14px;font-size:12.5px;color:#000;left:67.2px;transform-origin:0 50%;transform:scaleX(0.863);">008687</span>
<span style="top:425.6px;line-height:14px;font-size:12.5px;color:#000;left:131.5px;transform-origin:0 50%;transform:scaleX(0.865);">BRISE os</span>
<span style="top:444.6px;line-height:14px;font-size:12.5px;color:#8E1C1C;left:15.0px;transform-origin:0 50%;transform:scaleX(0.843);">zbo</span>
<span style="top:444.6px;line-height:14px;font-size:12.5px;color:#000;right:736.0px;transform-origin:100% 50%;transform:scaleX(0.865);">7</span>
<span style="top:444.6px;line-height:14px;font-size:12.5px;color:#000;left:67.2px;transform-origin:0 50%;transform:scaleX(0.863);">008688</span>
<span style="top:444.6px;line-height:14px;font-size:12.5px;color:#000;left:131.5px;transform-origin:0 50%;transform:scaleX(0.865);">BRISE SI</span>
<span style="top:464.6px;line-height:14px;font-size:12.5px;color:#8E1C1C;left:15.0px;transform-origin:0 50%;transform:scaleX(0.843);">zbo</span>
<span style="top:464.6px;line-height:14px;font-size:12.5px;color:#000;right:736.0px;transform-origin:100% 50%;transform:scaleX(0.865);">7</span>
<span style="top:464.6px;line-height:14px;font-size:12.5px;color:#000;left:67.2px;transform-origin:0 50%;transform:scaleX(0.863);">008970</span>
<span style="top:464.6px;line-height:14px;font-size:12.5px;color:#000;left:131.5px;transform-origin:0 50%;transform:scaleX(0.865);">Calgonit G</span>
<span style="top:483.6px;line-height:14px;font-size:12.5px;color:#8E1C1C;left:15.0px;transform-origin:0 50%;transform:scaleX(0.843);">zbo</span>
<span style="top:483.6px;line-height:14px;font-size:12.5px;color:#000;right:736.0px;transform-origin:100% 50%;transform:scaleX(0.865);">7</span>
<span style="top:483.6px;line-height:14px;font-size:12.5px;color:#000;left:67.2px;transform-origin:0 50%;transform:scaleX(0.863);">009010</span>
<span style="top:483.6px;line-height:14px;font-size:12.5px;color:#000;left:131.5px;transform-origin:0 50%;transform:scaleX(0.865);">hadr na p</span>
<span style="top:503.6px;line-height:14px;font-size:12.5px;color:#8E1C1C;left:15.0px;transform-origin:0 50%;transform:scaleX(0.843);">zbo</span>
<span style="top:503.6px;line-height:14px;font-size:12.5px;color:#000;right:736.0px;transform-origin:100% 50%;transform:scaleX(0.865);">7</span>
<span style="top:503.6px;line-height:14px;font-size:12.5px;color:#000;left:67.2px;transform-origin:0 50%;transform:scaleX(0.863);">009103</span>
<span style="top:503.6px;line-height:14px;font-size:12.5px;color:#000;left:131.5px;transform-origin:0 50%;transform:scaleX(0.865);">BRISE SI</span>
<span style="top:522.6px;line-height:14px;font-size:12.5px;color:#8E1C1C;left:15.0px;transform-origin:0 50%;transform:scaleX(0.843);">zbo</span>
<span style="top:522.6px;line-height:14px;font-size:12.5px;color:#000;right:736.0px;transform-origin:100% 50%;transform:scaleX(0.865);">7</span>
<span style="top:522.6px;line-height:14px;font-size:12.5px;color:#000;left:67.2px;transform-origin:0 50%;transform:scaleX(0.863);">009185</span>
<span style="top:522.6px;line-height:14px;font-size:12.5px;color:#000;left:131.5px;transform-origin:0 50%;transform:scaleX(0.865);">BRISE G</span>
<div style="left:754px;top:110px;width:17px;height:430px;background:linear-gradient(to right,#F3F1EC,#FDFDFB 50%,#FEFEFD)"></div>
<div style="left:754px;top:110px;width:17px;height:17px;background:linear-gradient(135deg,#CADAFD,#B6C9F6);box-sizing:border-box;border:1px solid #fff;border-radius:3px;box-shadow:inset -1px -1px 0 #9AB0E8"><svg width="15" height="15" viewBox="0 0 15 15" style="position:absolute;left:0;top:0"><path d="M3.5 9.5L7.5 5.5L11.5 9.5" stroke="#4D6185" stroke-width="2.2" fill="none"/></svg></div>
<div style="left:754px;top:128px;width:17px;height:16px;background:linear-gradient(135deg,#CADAFD,#B6C9F6);box-sizing:border-box;border:1px solid #fff;border-radius:3px;box-shadow:inset -1px -1px 0 #9AB0E8"><svg width="15" height="14" viewBox="0 0 15 15" style="position:absolute;left:0;top:0"><path d="M5 5.5h6M5 7.5h6M5 9.5h6" stroke="#EEF4FE" stroke-width="1"/><path d="M5 6.5h6M5 8.5h6M5 10.5h6" stroke="#8CB0F8" stroke-width="1"/></svg></div>
<div style="left:754px;top:523px;width:17px;height:17px;background:linear-gradient(135deg,#CADAFD,#B6C9F6);box-sizing:border-box;border:1px solid #fff;border-radius:3px;box-shadow:inset -1px -1px 0 #9AB0E8"><svg width="15" height="15" viewBox="0 0 15 15" style="position:absolute;left:0;top:0"><path d="M3.5 5.5L7.5 9.5L11.5 5.5" stroke="#4D6185" stroke-width="2.2" fill="none"/></svg></div>
<div style="left:11px;top:540px;width:743px;height:17px;background:linear-gradient(to bottom,#F3F1EC,#FDFDFB 50%,#FEFEFD)"></div>
<div style="left:11px;top:540px;width:17px;height:17px;background:linear-gradient(135deg,#CADAFD,#B6C9F6);box-sizing:border-box;border:1px solid #fff;border-radius:3px;box-shadow:inset -1px -1px 0 #9AB0E8"><svg width="15" height="15" viewBox="0 0 15 15" style="position:absolute;left:0;top:0"><path d="M9.5 3.5L5.5 7.5L9.5 11.5" stroke="#4D6185" stroke-width="2.2" fill="none"/></svg></div>
<div style="left:29px;top:540px;width:16px;height:17px;background:linear-gradient(135deg,#CADAFD,#B6C9F6);box-sizing:border-box;border:1px solid #fff;border-radius:3px;box-shadow:inset -1px -1px 0 #9AB0E8"><svg width="14" height="15" viewBox="0 0 15 15" style="position:absolute;left:0;top:0"><path d="M5 4v7M7 4v7M9 4v7" stroke="#EEF4FE" stroke-width="1" transform="translate(0.5,0)"/><path d="M6 4v7M8 4v7M10 4v7" stroke="#8CB0F8" stroke-width="1" transform="translate(0.5,0)"/></svg></div>
<div style="left:737px;top:540px;width:17px;height:17px;background:linear-gradient(135deg,#CADAFD,#B6C9F6);box-sizing:border-box;border:1px solid #fff;border-radius:3px;box-shadow:inset -1px -1px 0 #9AB0E8"><svg width="15" height="15" viewBox="0 0 15 15" style="position:absolute;left:0;top:0"><path d="M5.5 3.5L9.5 7.5L5.5 11.5" stroke="#4D6185" stroke-width="2.2" fill="none"/></svg></div>
<div style="left:754px;top:540px;width:18px;height:17px;background:#ECE9D8"><svg width="18" height="17" style="position:absolute;left:0;top:0"><g fill="#B8B4A2" transform="translate(0,1)"><rect x="11" y="3" width="2" height="2"/><rect x="7" y="7" width="2" height="2"/><rect x="11" y="7" width="2" height="2"/><rect x="3" y="11" width="2" height="2"/><rect x="7" y="11" width="2" height="2"/><rect x="11" y="11" width="2" height="2"/></g></svg></div>
<svg style="position:absolute;left:780px;top:582px" width="14" height="14"><path d="M13 1L1 13M13 5L5 13M13 9L9 13" stroke="#ACA899" stroke-width="1"/><path d="M13 2L2 13M13 6L6 13M13 10L10 13" stroke="#fff" stroke-width="1"/></svg>
<div style="left:174px;top:228px;width:587px;height:315.5px;background:#0A3CCC;border-radius:8px 8px 0 0;box-shadow:inset 1px 0 0 #0628A8,inset -1px -1px 0 #001890"></div>
<div style="left:174px;top:228px;width:587px;height:29px;background:linear-gradient(to bottom,#0A58E0 0%,#3C90FC 5%,#2C86FA 9%,#0E6CF2 16%,#065EEA 30%,#065CE8 50%,#0868F4 68%,#0A70FC 80%,#0868F4 88%,#0656D8 94%,#0240B0 100%);border-radius:8px 8px 0 0"></div>
<div style="left:178px;top:257px;width:579px;height:282.0px;background:#ECE9D8"></div>
<svg style="left:180px;top:236px" width="17" height="16" viewBox="0 0 17 16"><defs><linearGradient id="fl" x1="0" y1="0" x2="1" y2="0"><stop offset="0" stop-color="#D82810"/><stop offset=".45" stop-color="#FFD820"/><stop offset=".75" stop-color="#FF9A10"/><stop offset="1" stop-color="#E03810"/></linearGradient></defs><path d="M1 12l1.500-8.500 3-2 2 1 3-2.500 5.500-.5-2.500 12.500z" fill="url(#fl)"/><path d="M4.500 2l-1 8M8.500 1l-2.500 10M14.500 .5l-3 11" stroke="#180808" stroke-width="1.400" fill="none"/><path d="M1.500 3l-.5 4" stroke="#180808" stroke-width="1"/><path d="M.5 14.500l2-3 1.500 3 1.500-3.500 1.500 3.500h2l1-3 1.500 3 2-4 .5 4" stroke="#fff" stroke-width="1.300" fill="none"/><path d="M1 15h14" stroke="#101840" stroke-width="1"/></svg>
<span style="top:236.2px;line-height:15px;font-size:13px;color:#fff;font-weight:700;left:198.0px;letter-spacing:0.04px;text-shadow:1px 1px 0 #0a2a8a;">Skladová karta 003432</span>
<span style="top:236.2px;line-height:15px;font-size:13px;color:#fff;font-weight:700;left:366.0px;letter-spacing:-0.32px;text-shadow:1px 1px 0 #0a2a8a;">- změny</span>
<div style="left:690px;top:234px;width:20px;height:20px;background:radial-gradient(circle at 30% 25%,#5C8EF8 0%,#2E62E4 45%,#1A46C4 100%);border:1px solid #fff;border-radius:3px;box-sizing:border-box"><svg width="18" height="18" viewBox="1 1 18 18"><rect x="4.8" y="12.4" width="6.6" height="3" fill="#fff"/></svg></div>
<div style="left:712px;top:234px;width:20px;height:20px;background:radial-gradient(circle at 30% 25%,#5C8EF8 0%,#2E62E4 45%,#1A46C4 100%);border:1px solid #fff;border-radius:3px;box-sizing:border-box"><svg width="18" height="18" viewBox="1 1 18 18"><rect x="5.2" y="5.2" width="10.0" height="9.6" fill="none" stroke="#fff" stroke-width="1.3"/><rect x="4.8" y="4.4" width="10.8" height="3" fill="#fff"/></svg></div>
<div style="left:735px;top:234px;width:20px;height:20px;background:radial-gradient(circle at 30% 25%,#F09A78 0%,#DC4A24 45%,#B8300E 100%);border:1px solid #fff;border-radius:3px;box-sizing:border-box"><svg width="18" height="18" viewBox="1 1 18 18"><path d="M5.4 5.4L14.6 14.6M14.6 5.4L5.4 14.6" stroke="#fff" stroke-width="1.9" stroke-linecap="square"/></svg></div>
<span style="top:265.6px;line-height:14px;font-size:12.5px;color:#000;left:187.0px;transform-origin:0 50%;transform:scaleX(0.814);">Číslo:</span>
<div style="left:222px;top:263px;width:81px;height:19px;background:#FFFF00;box-sizing:border-box;border:1px solid;border-color:#8E8C7E #fff #fff #8E8C7E;box-shadow:inset 1px 1px 0 #8A887C,inset -1px -1px 0 #F2F0E6;"></div>
<span style="top:265.6px;line-height:14px;font-size:12.5px;color:#000;left:225.9px;transform-origin:0 50%;transform:scaleX(0.846);">003432</span>
<span style="top:265.6px;line-height:14px;font-size:12.5px;color:#000;left:310.5px;transform-origin:0 50%;transform:scaleX(0.822);">Název:</span>
<div style="left:351px;top:263px;width:237px;height:19px;background:#fff;box-sizing:border-box;border:1px solid;border-color:#8E8C7E #fff #fff #8E8C7E;box-shadow:inset 1px 1px 0 #8A887C,inset -1px -1px 0 #F2F0E6;"></div>
<div style="left:353px;top:266px;width:100px;height:13px;background:#316AC5"></div>
<span style="top:265.6px;line-height:14px;font-size:12.5px;color:#E4EEFC;left:354.5px;transform-origin:0 50%;transform:scaleX(0.805);">DEVIL WC gel 400 ml</span>
<span style="top:265.6px;line-height:14px;font-size:12.5px;color:#000;left:595.5px;transform-origin:0 50%;transform:scaleX(0.839);">EAN:</span>
<div style="left:624px;top:263px;width:119px;height:19px;background:#fff;box-sizing:border-box;border:1px solid;border-color:#8E8C7E #fff #fff #8E8C7E;box-shadow:inset 1px 1px 0 #8A887C,inset -1px -1px 0 #F2F0E6;"></div>
<span style="top:291.6px;line-height:14px;font-size:12.5px;color:#000;left:187.0px;transform-origin:0 50%;transform:scaleX(0.849);">Sklad:</span>
<div style="left:222px;top:291px;width:42px;height:19px;background:#fff;box-sizing:border-box;border:1px solid;border-color:#8E8C7E #fff #fff #8E8C7E;box-shadow:inset 1px 1px 0 #8A887C,inset -1px -1px 0 #F2F0E6;"></div>
<span style="top:293.6px;line-height:14px;font-size:12.5px;color:#ACA899;left:227.5px;transform-origin:0 50%;transform:scaleX(0.865);">7</span>
<div style="left:246px;top:293px;width:16px;height:15px;background:#ECE9D8;box-sizing:border-box;border:1px solid;border-color:#fff #716F64 #716F64 #fff;box-shadow:inset -1px -1px 0 #ACA899"><svg width="14" height="13" style="position:absolute;left:0;top:0"><path d="M3.5 5.0h7l-3.5 4z" fill="#ACA899"/></svg></div>
<span style="top:291.6px;line-height:14px;font-size:12.5px;color:#000;left:269.0px;transform-origin:0 50%;transform:scaleX(0.807);">Kategorie:</span>
<div style="left:320px;top:291px;width:64px;height:19px;background:#fff;box-sizing:border-box;border:1px solid;border-color:#8E8C7E #fff #fff #8E8C7E;box-shadow:inset 1px 1px 0 #8A887C,inset -1px -1px 0 #F2F0E6;"></div>
<span style="top:293.6px;line-height:14px;font-size:12.5px;color:#ACA899;left:323.2px;transform-origin:0 50%;transform:scaleX(0.905);">Zboží</span>
<div style="left:366px;top:293px;width:16px;height:15px;background:#ECE9D8;box-sizing:border-box;border:1px solid;border-color:#fff #716F64 #716F64 #fff;box-shadow:inset -1px -1px 0 #ACA899"><svg width="14" height="13" style="position:absolute;left:0;top:0"><path d="M3.5 5.0h7l-3.5 4z" fill="#ACA899"/></svg></div>
<span style="top:291.6px;line-height:14px;font-size:12.5px;color:#000;left:392.5px;transform-origin:0 50%;transform:scaleX(0.861);">Skup.:</span>
<div style="left:425px;top:291px;width:58px;height:19px;background:#fff;box-sizing:border-box;border:1px solid;border-color:#8E8C7E #fff #fff #8E8C7E;box-shadow:inset 1px 1px 0 #8A887C,inset -1px -1px 0 #F2F0E6;"></div>
<div style="left:483px;top:291px;width:18px;height:18px;background:#D6D2C2;box-sizing:border-box;border:1px solid;border-color:#fff #5A584E #5A584E #fff;box-shadow:inset -1px -1px 0 #ACA899"><svg width="16" height="16"><path d="M1.5 2.5h13L8 14.5z" fill="#000"/></svg></div>
<span style="top:291.6px;line-height:14px;font-size:12.5px;color:#000;left:506.5px;transform-origin:0 50%;transform:scaleX(0.840);">Balení:</span>
<div style="left:542px;top:291px;width:72px;height:19px;background:#fff;box-sizing:border-box;border:1px solid;border-color:#8E8C7E #fff #fff #8E8C7E;box-shadow:inset 1px 1px 0 #8A887C,inset -1px -1px 0 #F2F0E6;"></div>
<span style="top:293.6px;line-height:14px;font-size:12.5px;color:#000;left:545.5px;transform-origin:0 50%;transform:scaleX(0.865);">1</span>
<span style="top:291.6px;line-height:14px;font-size:12.5px;color:#000;left:619.0px;transform-origin:0 50%;transform:scaleX(0.825);">SKP:</span>
<div style="left:646px;top:291px;width:97px;height:19px;background:#fff;box-sizing:border-box;border:1px solid;border-color:#8E8C7E #fff #fff #8E8C7E;box-shadow:inset 1px 1px 0 #8A887C,inset -1px -1px 0 #F2F0E6;"></div>
<span style="top:318.6px;line-height:14px;font-size:12.5px;color:#000;left:187.0px;transform-origin:0 50%;transform:scaleX(0.850);">Množství:</span>
<div style="left:257px;top:318px;width:89px;height:18px;background:#fff;box-sizing:border-box;border:1px solid;border-color:#8E8C7E #fff #fff #8E8C7E;box-shadow:inset 1px 1px 0 #8A887C,inset -1px -1px 0 #F2F0E6;"></div>
<span style="top:319.6px;line-height:14px;font-size:12.5px;color:#ACA899;left:274.5px;transform-origin:0 50%;transform:scaleX(0.837);">38.000</span>
<span style="top:318.6px;line-height:14px;font-size:12.5px;color:#000;left:357.5px;transform-origin:0 50%;transform:scaleX(0.822);">Měr.j.:</span>
<div style="left:398px;top:318px;width:45px;height:18px;background:#fff;box-sizing:border-box;border:1px solid;border-color:#8E8C7E #fff #fff #8E8C7E;box-shadow:inset 1px 1px 0 #8A887C,inset -1px -1px 0 #F2F0E6;"></div>
<span style="top:319.6px;line-height:14px;font-size:12.5px;color:#000;left:400.5px;transform-origin:0 50%;transform:scaleX(0.800);">ks</span>
<span style="top:318.6px;line-height:14px;font-size:12.5px;color:#000;left:450.0px;transform-origin:0 50%;transform:scaleX(0.821);">Obrat.sk.:</span>
<div style="left:498px;top:318px;width:19px;height:18px;background:#fff;box-sizing:border-box;border:1px solid;border-color:#8E8C7E #fff #fff #8E8C7E;box-shadow:inset 1px 1px 0 #8A887C,inset -1px -1px 0 #F2F0E6;"></div>
<span style="top:318.6px;line-height:14px;font-size:12.5px;color:#000;left:525.5px;transform-origin:0 50%;transform:scaleX(0.853);">Dodavatel:</span>
<div style="left:580px;top:318px;width:149px;height:18px;background:#fff;box-sizing:border-box;border:1px solid;border-color:#8E8C7E #fff #fff #8E8C7E;box-shadow:inset 1px 1px 0 #8A887C,inset -1px -1px 0 #F2F0E6;"></div>
<span style="top:319.6px;line-height:14px;font-size:12.5px;color:#000;left:583.0px;transform-origin:0 50%;transform:scaleX(0.806);">Ag-Pro s.r.o.</span>
<div style="left:729px;top:318px;width:18px;height:18px;background:#D6D2C2;box-sizing:border-box;border:1px solid;border-color:#fff #5A584E #5A584E #fff;box-shadow:inset -1px -1px 0 #ACA899"><svg width="16" height="16"><path d="M1.5 2.5h13L8 14.5z" fill="#000"/></svg></div>
<span style="top:344.3px;line-height:14px;font-size:12.5px;color:#000;left:187.0px;transform-origin:0 50%;transform:scaleX(0.836);">Rezervováno:</span>
<div style="left:257px;top:345px;width:89px;height:18px;background:#fff;box-sizing:border-box;border:1px solid;border-color:#8E8C7E #fff #fff #8E8C7E;box-shadow:inset 1px 1px 0 #8A887C,inset -1px -1px 0 #F2F0E6;"></div>
<span style="top:346.6px;line-height:14px;font-size:12.5px;color:#ACA899;left:277.5px;transform-origin:0 50%;transform:scaleX(0.863);">0.000</span>
<span style="top:344.3px;line-height:14px;font-size:12.5px;color:#000;left:357.5px;transform-origin:0 50%;transform:scaleX(0.854);">%DPH:</span>
<div style="left:398px;top:345px;width:45px;height:19px;background:#fff;box-sizing:border-box;border:1px solid;border-color:#8E8C7E #fff #fff #8E8C7E;box-shadow:inset 1px 1px 0 #8A887C,inset -1px -1px 0 #F2F0E6;"></div>
<span style="top:347.1px;line-height:14px;font-size:12.5px;color:#000;left:400.5px;transform-origin:0 50%;transform:scaleX(0.935);">20</span>
<div style="left:426px;top:347px;width:15px;height:15px;background:#ECE9D8;box-sizing:border-box;border:1px solid;border-color:#fff #716F64 #716F64 #fff;box-shadow:inset -1px -1px 0 #ACA899"><svg width="13" height="13" style="position:absolute;left:0;top:0"><path d="M3.0 5.0h7l-3.5 4z" fill="#000"/></svg></div>
<span style="top:371.3px;line-height:14px;font-size:12.5px;color:#000;left:187.0px;transform-origin:0 50%;transform:scaleX(0.799);">Min.sklad.limit:</span>
<div style="left:257px;top:370px;width:54px;height:18px;background:#fff;box-sizing:border-box;border:1px solid;border-color:#8E8C7E #fff #fff #8E8C7E;box-shadow:inset 1px 1px 0 #8A887C,inset -1px -1px 0 #F2F0E6;"></div>
<span style="top:372.6px;line-height:14px;font-size:12.5px;color:#000;left:274.0px;transform-origin:50% 50%;transform:scaleX(0.865);">0</span>
<span style="top:371.3px;line-height:14px;font-size:12.5px;color:#000;left:327.0px;transform-origin:0 50%;transform:scaleX(0.816);">Hmotnost:</span>
<div style="left:378px;top:370px;width:65px;height:18px;background:#fff;box-sizing:border-box;border:1px solid;border-color:#8E8C7E #fff #fff #8E8C7E;box-shadow:inset 1px 1px 0 #8A887C,inset -1px -1px 0 #F2F0E6;"></div>
<span style="top:372.6px;line-height:14px;font-size:12.5px;color:#000;left:389.5px;transform-origin:0 50%;transform:scaleX(0.863);">0.000</span>
<div style="left:187px;top:402px;width:92px;height:77px;box-sizing:border-box;border:1px solid #ACA899;box-shadow:1px 1px 0 #fff,inset 1px 1px 0 #fff"></div>
<div style="left:193px;top:396px;width:48.5px;height:13px;background:#ECE9D8"></div>
<span style="top:395.1px;line-height:14px;font-size:12.5px;color:#000;left:195.5px;transform-origin:0 50%;transform:scaleX(0.850);">Umístění</span>
<span style="top:418.1px;line-height:14px;font-size:12.5px;color:#000;left:194.0px;transform-origin:0 50%;transform:scaleX(0.854);">Řada:</span>
<div style="left:238px;top:416px;width:34px;height:18px;background:#fff;box-sizing:border-box;border:1px solid;border-color:#8E8C7E #fff #fff #8E8C7E;box-shadow:inset 1px 1px 0 #8A887C,inset -1px -1px 0 #F2F0E6;"></div>
<span style="top:436.1px;line-height:14px;font-size:12.5px;color:#000;left:194.0px;transform-origin:0 50%;transform:scaleX(0.844);">Regál:</span>
<div style="left:238px;top:435px;width:34px;height:18px;background:#fff;box-sizing:border-box;border:1px solid;border-color:#8E8C7E #fff #fff #8E8C7E;box-shadow:inset 1px 1px 0 #8A887C,inset -1px -1px 0 #F2F0E6;"></div>
<span style="top:456.3px;line-height:14px;font-size:12.5px;color:#000;left:194.0px;transform-origin:0 50%;transform:scaleX(0.848);">Buňka:</span>
<div style="left:238px;top:455px;width:34px;height:18px;background:#fff;box-sizing:border-box;border:1px solid;border-color:#8E8C7E #fff #fff #8E8C7E;box-shadow:inset 1px 1px 0 #8A887C,inset -1px -1px 0 #F2F0E6;"></div>
<div style="left:287px;top:402px;width:155px;height:55px;box-sizing:border-box;border:1px solid #ACA899;box-shadow:1px 1px 0 #fff,inset 1px 1px 0 #fff"></div>
<div style="left:293px;top:396px;width:127px;height:13px;background:#ECE9D8"></div>
<span style="top:395.1px;line-height:14px;font-size:12.5px;color:#000;left:295.5px;transform-origin:0 50%;transform:scaleX(0.858);">Ceny jednotkové nákupní</span>
<span style="top:417.1px;line-height:14px;font-size:12.5px;color:#000;left:299.5px;transform-origin:0 50%;transform:scaleX(0.781);">Průměrná:</span>
<div style="left:355px;top:415px;width:80px;height:18px;background:#fff;box-sizing:border-box;border:1px solid;border-color:#8E8C7E #fff #fff #8E8C7E;box-shadow:inset 1px 1px 0 #8A887C,inset -1px -1px 0 #F2F0E6;"></div>
<span style="top:417.6px;line-height:14px;font-size:12.5px;color:#ACA899;right:365.0px;transform-origin:100% 50%;transform:scaleX(0.865);">34.59</span>
<span style="top:436.1px;line-height:14px;font-size:12.5px;color:#000;left:299.5px;transform-origin:0 50%;transform:scaleX(0.825);">Poslední:</span>
<div style="left:355px;top:436px;width:80px;height:18px;background:#fff;box-sizing:border-box;border:1px solid;border-color:#8E8C7E #fff #fff #8E8C7E;box-shadow:inset 1px 1px 0 #8A887C,inset -1px -1px 0 #F2F0E6;"></div>
<span style="top:438.3px;line-height:14px;font-size:12.5px;color:#ACA899;right:365.0px;transform-origin:100% 50%;transform:scaleX(0.865);">33.91</span>
<span style="top:462.5px;line-height:14px;font-size:12.5px;color:#000;left:287.5px;transform-origin:0 50%;transform:scaleX(0.824);">Celk.hodnota:</span>
<div style="left:355px;top:459px;width:80px;height:18px;background:#fff;box-sizing:border-box;border:1px solid;border-color:#8E8C7E #fff #fff #8E8C7E;box-shadow:inset 1px 1px 0 #8A887C,inset -1px -1px 0 #F2F0E6;"></div>
<span style="top:461.6px;line-height:14px;font-size:12.5px;color:#ACA899;right:365.0px;transform-origin:100% 50%;transform:scaleX(0.865);">1 314.34</span>
<div style="left:187px;top:487.5px;width:13px;height:13px;background:#fff;box-sizing:border-box;border:1px solid;border-color:#8E8C7E #fff #fff #8E8C7E;box-shadow:inset 1px 1px 0 #8A887C,inset -1px -1px 0 #F2F0E6;"></div>
<span style="top:487.1px;line-height:14px;font-size:12.5px;color:#000;left:204.5px;transform-origin:0 50%;transform:scaleX(0.854);">evidovat výrobní čísla každého kusu při výdeji</span>
<div style="left:187px;top:509px;width:113px;height:19px;background:#ECE9D8;box-sizing:border-box;border:1px solid;border-color:#fff #5A584E #5A584E #fff;box-shadow:inset -1px -1px 0 #ACA899"></div>
<span style="top:511.4px;line-height:14px;font-size:12.5px;color:#000;left:217.1px;transform-origin:0 50%;transform:scaleX(0.868);">Požadavky</span>
<div style="left:304px;top:509px;width:133px;height:19px;background:#ECE9D8;box-sizing:border-box;border:1px solid;border-color:#fff #5A584E #5A584E #fff;box-shadow:inset -1px -1px 0 #ACA899"></div>
<span style="top:511.4px;line-height:14px;font-size:12.5px;color:#000;left:317.4px;transform-origin:0 50%;transform:scaleX(0.846);">Nesplněné objednávky</span>
<div style="left:451px;top:351px;width:295px;height:128px;box-sizing:border-box;border:1px solid #ACA899;box-shadow:1px 1px 0 #fff,inset 1px 1px 0 #fff"></div>
<div style="left:457.5px;top:345px;width:134.0px;height:13px;background:#ECE9D8"></div>
<span style="top:344.1px;line-height:14px;font-size:12.5px;color:#000;left:460.0px;transform-origin:0 50%;transform:scaleX(0.841);">Prodejní ceny (za jednotku)</span>
<span style="top:364.1px;line-height:14px;font-size:12.5px;color:#000;left:521.5px;transform-origin:0 50%;transform:scaleX(0.819);">% rabatu</span>
<span style="top:364.1px;line-height:14px;font-size:12.5px;color:#000;left:588.2px;transform-origin:0 50%;transform:scaleX(0.819);">bez DPH</span>
<span style="top:364.1px;line-height:14px;font-size:12.5px;color:#000;left:669.5px;transform-origin:0 50%;transform:scaleX(0.844);">s DPH</span>
<span style="top:379.8px;line-height:14px;font-size:12.5px;color:#000;left:467.5px;transform-origin:0 50%;transform:scaleX(0.854);">1. úrovně:</span>
<div style="left:521px;top:381px;width:45px;height:16px;background:#fff;box-sizing:border-box;border:1px solid;border-color:#8E8C7E #fff #fff #8E8C7E;box-shadow:inset 1px 1px 0 #8A887C,inset -1px -1px 0 #F2F0E6;"></div>
<div style="left:568px;top:381px;width:81px;height:16px;background:#fff;box-sizing:border-box;border:1px solid;border-color:#8E8C7E #fff #fff #8E8C7E;box-shadow:inset 1px 1px 0 #8A887C,inset -1px -1px 0 #F2F0E6;"></div>
<div style="left:650px;top:381px;width:80px;height:16px;background:#fff;box-sizing:border-box;border:1px solid;border-color:#8E8C7E #fff #fff #8E8C7E;box-shadow:inset 1px 1px 0 #8A887C,inset -1px -1px 0 #F2F0E6;"></div>
<span style="top:382.1px;line-height:14px;font-size:12.5px;color:#000;right:233.8px;transform-origin:100% 50%;transform:scaleX(0.865);">0.00</span>
<span style="top:382.1px;line-height:14px;font-size:12.5px;color:#000;left:585.5px;transform-origin:0 50%;transform:scaleX(0.863);">34.59</span>
<span style="top:382.1px;line-height:14px;font-size:12.5px;color:#000;left:667.0px;transform-origin:0 50%;transform:scaleX(0.831);">41.51</span>
<span style="top:397.3px;line-height:14px;font-size:12.5px;color:#000;left:467.5px;transform-origin:0 50%;transform:scaleX(0.854);">2. úrovně:</span>
<div style="left:521px;top:398px;width:45px;height:16px;background:#fff;box-sizing:border-box;border:1px solid;border-color:#8E8C7E #fff #fff #8E8C7E;box-shadow:inset 1px 1px 0 #8A887C,inset -1px -1px 0 #F2F0E6;"></div>
<div style="left:568px;top:398px;width:81px;height:16px;background:#fff;box-sizing:border-box;border:1px solid;border-color:#8E8C7E #fff #fff #8E8C7E;box-shadow:inset 1px 1px 0 #8A887C,inset -1px -1px 0 #F2F0E6;"></div>
<div style="left:650px;top:398px;width:80px;height:16px;background:#fff;box-sizing:border-box;border:1px solid;border-color:#8E8C7E #fff #fff #8E8C7E;box-shadow:inset 1px 1px 0 #8A887C,inset -1px -1px 0 #F2F0E6;"></div>
<span style="top:399.6px;line-height:14px;font-size:12.5px;color:#000;right:233.8px;transform-origin:100% 50%;transform:scaleX(0.865);">0.00</span>
<span style="top:399.6px;line-height:14px;font-size:12.5px;color:#000;left:585.5px;transform-origin:0 50%;transform:scaleX(0.863);">34.59</span>
<span style="top:399.6px;line-height:14px;font-size:12.5px;color:#000;left:667.0px;transform-origin:0 50%;transform:scaleX(0.831);">41.51</span>
<span style="top:414.8px;line-height:14px;font-size:12.5px;color:#000;left:467.5px;transform-origin:0 50%;transform:scaleX(0.854);">3. úrovně:</span>
<div style="left:521px;top:416px;width:45px;height:16px;background:#fff;box-sizing:border-box;border:1px solid;border-color:#8E8C7E #fff #fff #8E8C7E;box-shadow:inset 1px 1px 0 #8A887C,inset -1px -1px 0 #F2F0E6;"></div>
<div style="left:568px;top:416px;width:81px;height:16px;background:#fff;box-sizing:border-box;border:1px solid;border-color:#8E8C7E #fff #fff #8E8C7E;box-shadow:inset 1px 1px 0 #8A887C,inset -1px -1px 0 #F2F0E6;"></div>
<div style="left:650px;top:416px;width:80px;height:16px;background:#fff;box-sizing:border-box;border:1px solid;border-color:#8E8C7E #fff #fff #8E8C7E;box-shadow:inset 1px 1px 0 #8A887C,inset -1px -1px 0 #F2F0E6;"></div>
<span style="top:417.1px;line-height:14px;font-size:12.5px;color:#000;right:233.8px;transform-origin:100% 50%;transform:scaleX(0.865);">0.00</span>
<span style="top:417.1px;line-height:14px;font-size:12.5px;color:#000;left:585.5px;transform-origin:0 50%;transform:scaleX(0.863);">34.59</span>
<span style="top:417.1px;line-height:14px;font-size:12.5px;color:#000;left:667.0px;transform-origin:0 50%;transform:scaleX(0.831);">41.51</span>
<div style="left:468px;top:440px;width:13px;height:13px;background:#fff;box-sizing:border-box;border:1px solid;border-color:#8E8C7E #fff #fff #8E8C7E;box-shadow:inset 1px 1px 0 #8A887C,inset -1px -1px 0 #F2F0E6;"></div>
<span style="top:438.6px;line-height:14px;font-size:12.5px;color:#000;left:485.0px;transform-origin:0 50%;transform:scaleX(0.853);">nepřepočítávat automaticky prodejní cenu při příjmu</span>
<div style="left:468px;top:459px;width:13px;height:13px;background:#fff;box-sizing:border-box;border:1px solid;border-color:#8E8C7E #fff #fff #8E8C7E;box-shadow:inset 1px 1px 0 #8A887C,inset -1px -1px 0 #F2F0E6;"></div>
<span style="top:458.1px;line-height:14px;font-size:12.5px;color:#000;left:485.0px;transform-origin:0 50%;transform:scaleX(0.842);">nezahrnovat do výpočtu slev na jednu položku</span>
<div style="left:451px;top:486px;width:134px;height:19px;background:#ECE9D8;box-sizing:border-box;border:1px solid;border-color:#fff #5A584E #5A584E #fff;box-shadow:inset -1px -1px 0 #ACA899"></div>
<span style="top:488.4px;line-height:14px;font-size:12.5px;color:#000;left:478.1px;transform-origin:0 50%;transform:scaleX(0.853);">Doplňkové údaje</span>
<div style="left:591px;top:486px;width:75px;height:19px;background:#ECE9D8;box-sizing:border-box;border:1px solid;border-color:#fff #5A584E #5A584E #fff;box-shadow:inset -1px -1px 0 #ACA899"></div>
<span style="top:488.4px;line-height:14px;font-size:12.5px;color:#000;left:605.3px;transform-origin:0 50%;transform:scaleX(0.829);">Poznámky</span>
<div style="left:682px;top:486px;width:64px;height:19px;background:#ECE9D8;box-sizing:border-box;border:1px solid;border-color:#fff #5A584E #5A584E #fff;box-shadow:inset -1px -1px 0 #ACA899"></div>
<span style="top:488.4px;line-height:14px;font-size:12.5px;color:#000;left:703.0px;transform-origin:0 50%;transform:scaleX(0.819);">O.K.</span>
<div style="left:452px;top:511px;width:13px;height:13px;background:#fff;box-sizing:border-box;border:1px solid;border-color:#8E8C7E #fff #fff #8E8C7E;box-shadow:inset 1px 1px 0 #8A887C,inset -1px -1px 0 #F2F0E6;"></div>
<span style="top:510.4px;line-height:14px;font-size:12.5px;color:#000;left:468.5px;transform-origin:0 50%;transform:scaleX(0.849);">Neaktivní - bude skryta</span>
<div style="left:591px;top:509px;width:75px;height:19px;background:#ECE9D8;box-sizing:border-box;border:1px solid;border-color:#fff #5A584E #5A584E #fff;box-shadow:inset -1px -1px 0 #ACA899"></div>
<span style="top:511.4px;line-height:14px;font-size:12.5px;color:#000;left:612.0px;transform-origin:0 50%;transform:scaleX(0.837);">Pohyby</span>
<div style="left:682px;top:509px;width:64px;height:19px;background:#ECE9D8;box-sizing:border-box;border:1px solid;border-color:#fff #5A584E #5A584E #fff;box-shadow:inset -1px -1px 0 #ACA899"></div>
<span style="top:511.4px;line-height:14px;font-size:12.5px;color:#000;left:699.2px;transform-origin:0 50%;transform:scaleX(0.822);">Storno</span>
<div style="left:704px;top:501px;width:7px;height:1px;background:#000"></div>
<div style="left:700px;top:524px;width:7px;height:1px;background:#000"></div>
</body></html>
